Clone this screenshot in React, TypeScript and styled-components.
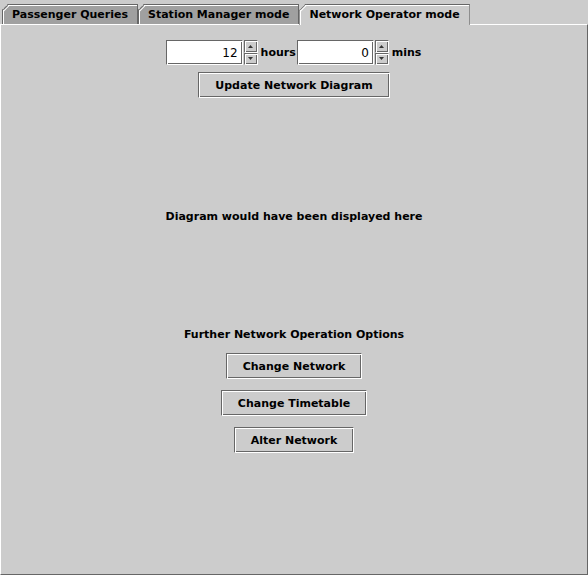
import React from 'react';
import styled, { createGlobalStyle, css } from 'styled-components';

const Global = createGlobalStyle`
  html, body { margin: 0; padding: 0; background: #cccccc; }
  * { box-sizing: border-box; }
`;

const etched = css`
  border: 1px solid;
  border-color: #666666 #ffffff #ffffff #666666;
  box-shadow: inset 1px 1px 0 #ffffff, inset -1px -1px 0 #666666;
`;

const Frame = styled.div`
  width: 588px;
  height: 575px;
  display: flex;
  flex-direction: column;
  background: #cccccc;
  font-family: "DejaVu Sans", sans-serif;
  font-size: 11px;
  font-weight: bold;
  color: #000000;
`;

const TabStrip = styled.div`
  flex: none;
  height: 24px;
  display: flex;
  align-items: flex-end;
  padding-left: 2px;
`;

const Tab = styled.div<{ $selected?: boolean }>`
  position: relative;
  height: ${p => (p.$selected ? '21px' : '20px')};
  margin-bottom: ${p => (p.$selected ? '-1px' : '0')};
  z-index: ${p => (p.$selected ? 1 : 0)};
  padding: 0 9px 1px 9px;
  display: flex;
  align-items: center;
  background: ${p => (p.$selected ? '#cccccc' : '#a0a0a0')};
  border-top: 1px solid #666666;
  border-right: 1px solid #666666;
  border-left: 1px solid #666666;
  box-shadow: inset 1px 1px 0 #ffffff;
  clip-path: polygon(6px 0, 100% 0, 100% 100%, 0 100%, 0 6px);
  white-space: nowrap;

  &::before {
    content: '';
    position: absolute;
    left: -1px;
    top: 5px;
    width: 9px;
    height: 1px;
    background: #666666;
    transform-origin: 0 0;
    transform: rotate(-45deg);
  }
  &::after {
    content: '';
    position: absolute;
    left: 0px;
    top: 6px;
    width: 9px;
    height: 1px;
    background: #ffffff;
    transform-origin: 0 0;
    transform: rotate(-45deg);
  }
`;

const Panel = styled.div`
  flex: 1;
  border-top: 1px solid #ffffff;
  border-left: 1px solid #ffffff;
  border-right: 1px solid #666666;
  border-bottom: 1px solid #666666;
  display: flex;
  flex-direction: column;
  align-items: center;
  padding-top: 15px;
`;

const SpinRow = styled.div`
  display: flex;
  align-items: center;
  height: 25px;
`;

const Spinner = styled.div`
  display: flex;
  height: 25px;
`;

const Field = styled.input`
  ${etched};
  width: 77px;
  height: 25px;
  margin: 0;
  background: #ffffff;
  text-align: right;
  padding: 0 4px 0 2px;
  font-family: "DejaVu Sans", sans-serif;
  font-size: 12px;
  font-weight: normal;
  color: #000000;
  outline: none;
`;

const SpinButtons = styled.div`
  display: flex;
  flex-direction: column;
  width: 14px;
  margin-left: 1px;
`;

const SpinButton = styled.div`
  ${etched};
  flex: 1;
  background: #cccccc;
  display: flex;
  align-items: center;
  justify-content: center;
`;

const Unit = styled.span`
  margin: 0 1px 0 3px;
`;

const Button = styled.button`
  ${etched};
  height: 26px;
  padding: 0 16px;
  margin: 0;
  background: #cccccc;
  font-family: "DejaVu Sans", sans-serif;
  font-size: 11px;
  font-weight: bold;
  color: #000000;
  cursor: default;
  white-space: nowrap;
`;

const UpdateButton = styled(Button)`
  margin-top: 7px;
`;

const Message = styled.div<{ $gap: number }>`
  margin-top: ${p => p.$gap}px;
  line-height: 16px;
`;

const Options = styled.div`
  margin-top: 10px;
  display: flex;
  flex-direction: column;
  align-items: center;
  gap: 11px;
`;

const Arrow: React.FC<{ up?: boolean }> = ({ up }) => (
  <svg width="5" height="3" viewBox="0 0 5 3">
    {up ? <polygon points="0,3 5,3 2.5,0" fill="#333" /> : <polygon points="0,0 5,0 2.5,3" fill="#333" />}
  </svg>
);

const Spin: React.FC<{ value: string }> = ({ value }) => (
  <Spinner>
    <Field readOnly defaultValue={value} />
    <SpinButtons>
      <SpinButton><Arrow up /></SpinButton>
      <SpinButton><Arrow /></SpinButton>
    </SpinButtons>
  </Spinner>
);

export default function App() {
  return (
    <>
      <Global />
      <Frame>
        <TabStrip>
          <Tab>Passenger Queries</Tab>
          <Tab>Station Manager mode</Tab>
          <Tab $selected>Network Operator mode</Tab>
        </TabStrip>
        <Panel>
          <SpinRow>
            <Spin value="12" />
            <Unit>hours</Unit>
            <Spin value="0" />
            <Unit>mins</Unit>
          </SpinRow>
          <UpdateButton>Update Network Diagram</UpdateButton>
          <Message $gap={111}>Diagram would have been displayed here</Message>
          <Message $gap={102}>Further Network Operation Options</Message>
          <Options>
            <Button>Change Network</Button>
            <Button>Change Timetable</Button>
            <Button>Alter Network</Button>
          </Options>
        </Panel>
      </Frame>
    </>
  );
}
